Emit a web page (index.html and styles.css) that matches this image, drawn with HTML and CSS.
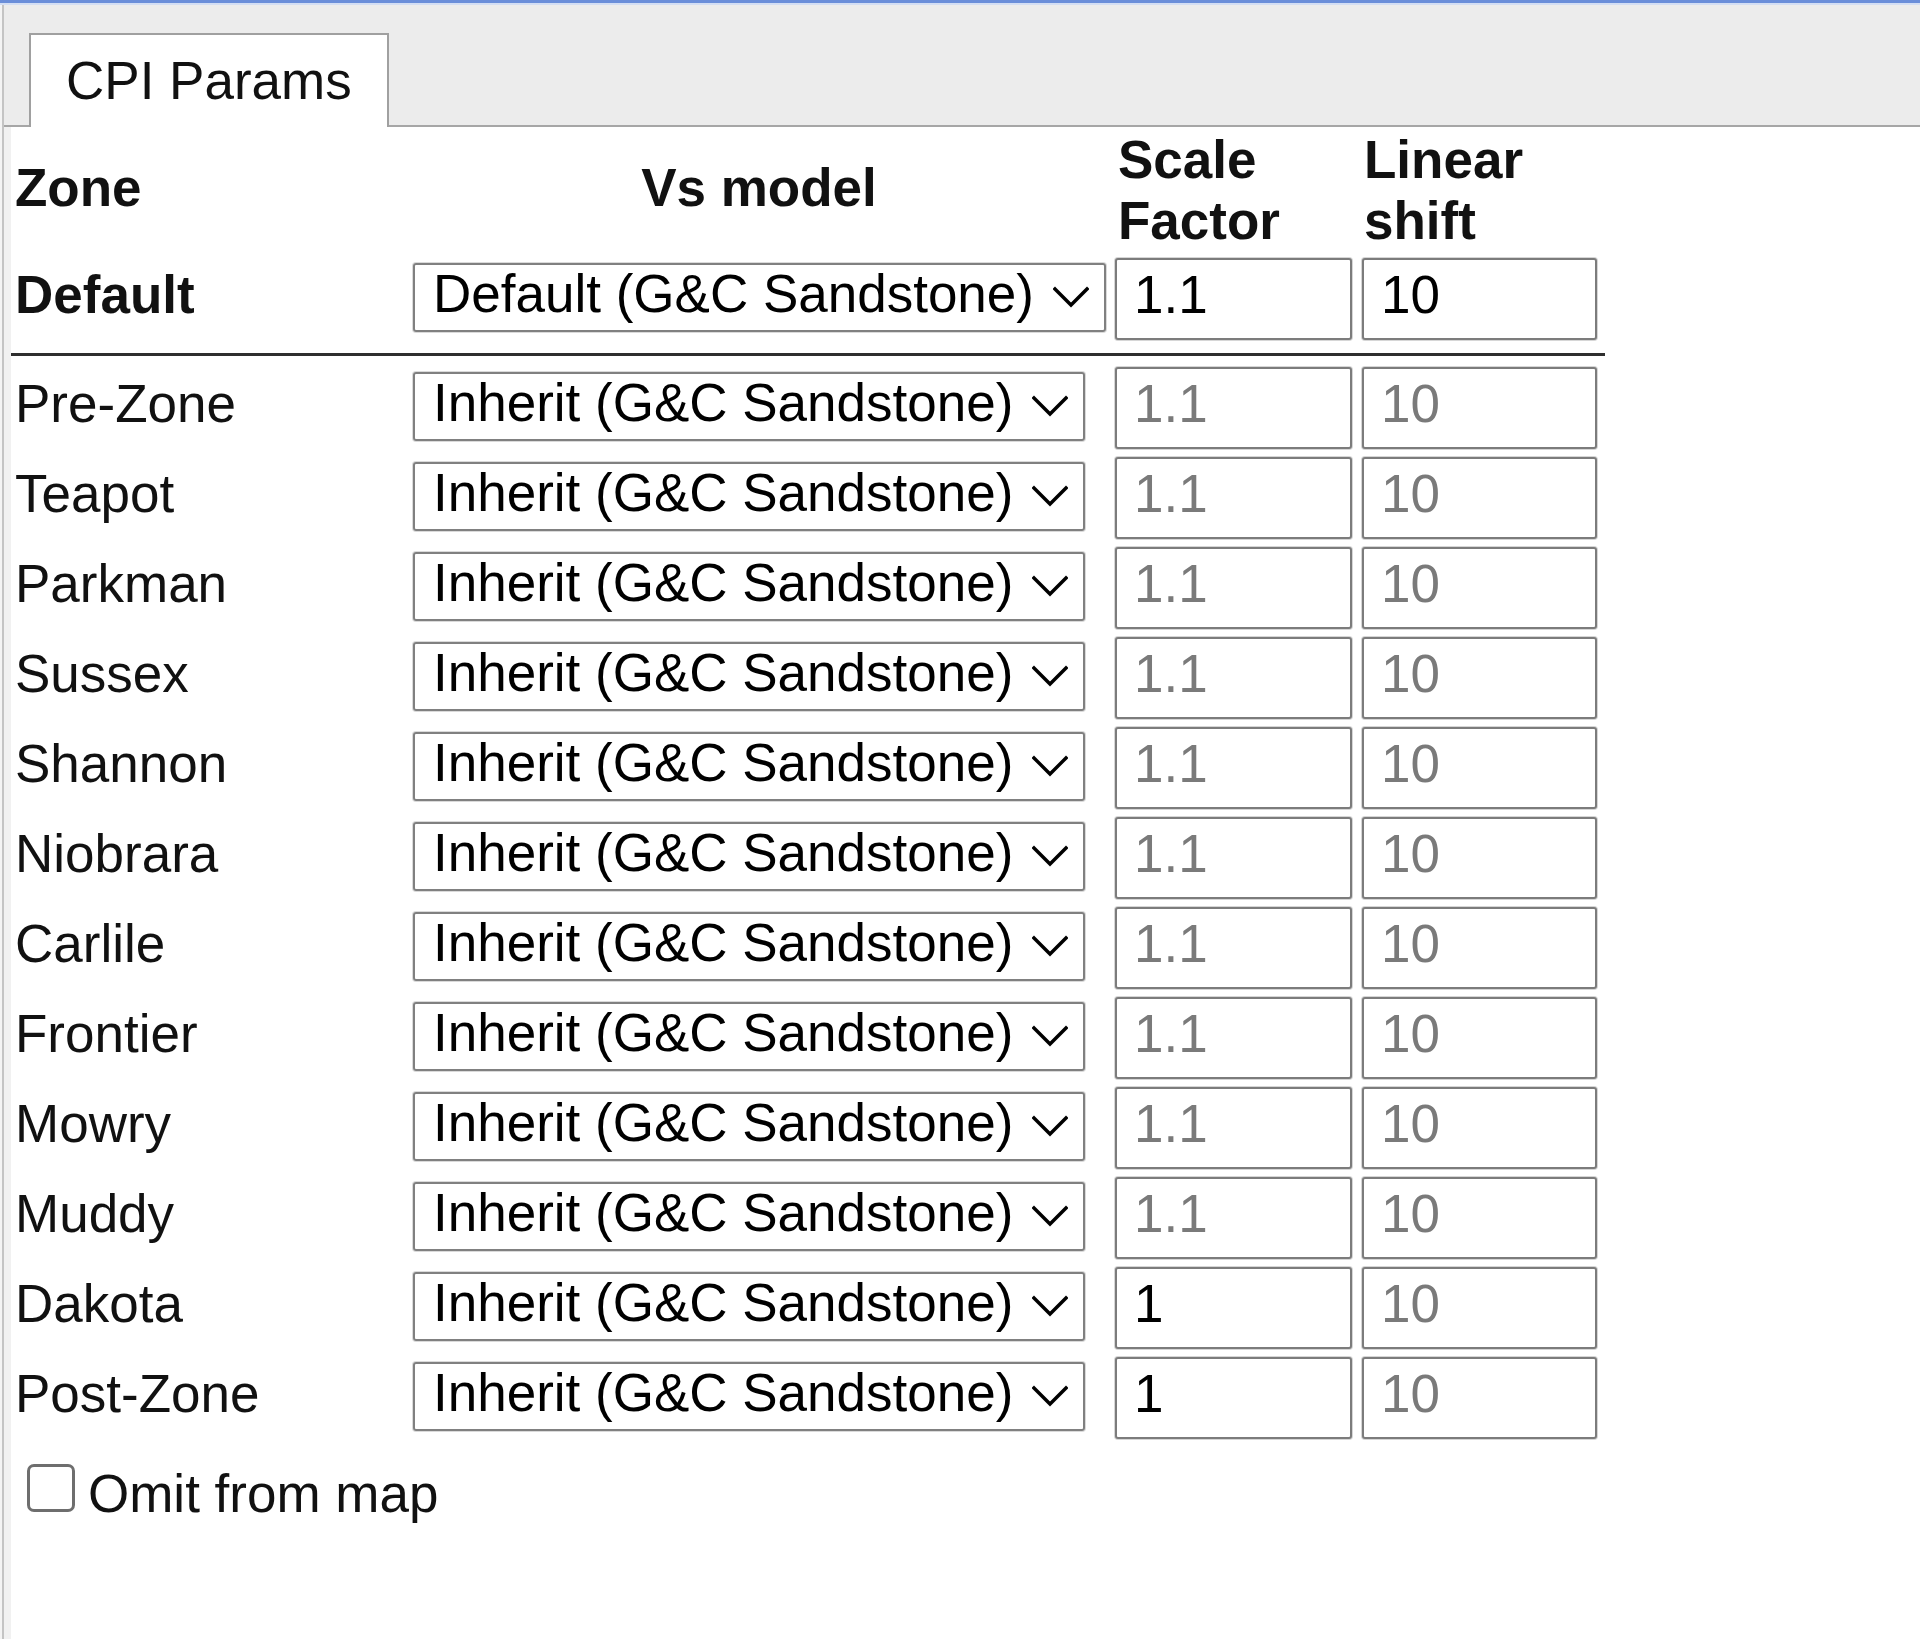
FILE: index.html
```html
<!DOCTYPE html>
<html lang="en">
<head>
<meta charset="utf-8">
<title>CPI Params</title>
<link rel="stylesheet" href="styles.css">
</head>
<body>
<div class="topbar"></div>
<div class="app">
  <div class="tabstrip">
    <div class="tab">CPI Params</div>
  </div>
  <div class="content">
    <div class="grid head">
      <div class="h h-zone">Zone</div>
      <div class="h h-model">Vs model</div>
      <div class="h h-num">Scale<br>Factor</div>
      <div class="h h-num2">Linear<br>shift</div>
    </div>
    <div class="grid row">
      <div class="label bold">Default</div>
      <div class="select select-default"><span>Default (G&amp;C Sandstone)</span><svg class="chev" viewBox="0 0 36 22" width="36" height="22"><polyline points="2,3 18,19 34,3"/></svg></div>
      <input class="num" type="text" value="1.1">
      <input class="num" type="text" value="10">
    </div>
    <div class="sep"></div>
    <div class="zones">
      <div class="grid row">
        <div class="label">Pre-Zone</div>
        <div class="select"><span>Inherit (G&amp;C Sandstone)</span><svg class="chev" viewBox="0 0 36 22" width="36" height="22"><polyline points="2,3 18,19 34,3"/></svg></div>
        <input class="num" type="text" placeholder="1.1">
        <input class="num" type="text" placeholder="10">
      </div>
      <div class="grid row">
        <div class="label">Teapot</div>
        <div class="select"><span>Inherit (G&amp;C Sandstone)</span><svg class="chev" viewBox="0 0 36 22" width="36" height="22"><polyline points="2,3 18,19 34,3"/></svg></div>
        <input class="num" type="text" placeholder="1.1">
        <input class="num" type="text" placeholder="10">
      </div>
      <div class="grid row">
        <div class="label">Parkman</div>
        <div class="select"><span>Inherit (G&amp;C Sandstone)</span><svg class="chev" viewBox="0 0 36 22" width="36" height="22"><polyline points="2,3 18,19 34,3"/></svg></div>
        <input class="num" type="text" placeholder="1.1">
        <input class="num" type="text" placeholder="10">
      </div>
      <div class="grid row">
        <div class="label">Sussex</div>
        <div class="select"><span>Inherit (G&amp;C Sandstone)</span><svg class="chev" viewBox="0 0 36 22" width="36" height="22"><polyline points="2,3 18,19 34,3"/></svg></div>
        <input class="num" type="text" placeholder="1.1">
        <input class="num" type="text" placeholder="10">
      </div>
      <div class="grid row">
        <div class="label">Shannon</div>
        <div class="select"><span>Inherit (G&amp;C Sandstone)</span><svg class="chev" viewBox="0 0 36 22" width="36" height="22"><polyline points="2,3 18,19 34,3"/></svg></div>
        <input class="num" type="text" placeholder="1.1">
        <input class="num" type="text" placeholder="10">
      </div>
      <div class="grid row">
        <div class="label">Niobrara</div>
        <div class="select"><span>Inherit (G&amp;C Sandstone)</span><svg class="chev" viewBox="0 0 36 22" width="36" height="22"><polyline points="2,3 18,19 34,3"/></svg></div>
        <input class="num" type="text" placeholder="1.1">
        <input class="num" type="text" placeholder="10">
      </div>
      <div class="grid row">
        <div class="label">Carlile</div>
        <div class="select"><span>Inherit (G&amp;C Sandstone)</span><svg class="chev" viewBox="0 0 36 22" width="36" height="22"><polyline points="2,3 18,19 34,3"/></svg></div>
        <input class="num" type="text" placeholder="1.1">
        <input class="num" type="text" placeholder="10">
      </div>
      <div class="grid row">
        <div class="label">Frontier</div>
        <div class="select"><span>Inherit (G&amp;C Sandstone)</span><svg class="chev" viewBox="0 0 36 22" width="36" height="22"><polyline points="2,3 18,19 34,3"/></svg></div>
        <input class="num" type="text" placeholder="1.1">
        <input class="num" type="text" placeholder="10">
      </div>
      <div class="grid row">
        <div class="label">Mowry</div>
        <div class="select"><span>Inherit (G&amp;C Sandstone)</span><svg class="chev" viewBox="0 0 36 22" width="36" height="22"><polyline points="2,3 18,19 34,3"/></svg></div>
        <input class="num" type="text" placeholder="1.1">
        <input class="num" type="text" placeholder="10">
      </div>
      <div class="grid row">
        <div class="label">Muddy</div>
        <div class="select"><span>Inherit (G&amp;C Sandstone)</span><svg class="chev" viewBox="0 0 36 22" width="36" height="22"><polyline points="2,3 18,19 34,3"/></svg></div>
        <input class="num" type="text" placeholder="1.1">
        <input class="num" type="text" placeholder="10">
      </div>
      <div class="grid row">
        <div class="label">Dakota</div>
        <div class="select"><span>Inherit (G&amp;C Sandstone)</span><svg class="chev" viewBox="0 0 36 22" width="36" height="22"><polyline points="2,3 18,19 34,3"/></svg></div>
        <input class="num" type="text" value="1" placeholder="1.1">
        <input class="num" type="text" placeholder="10">
      </div>
      <div class="grid row">
        <div class="label">Post-Zone</div>
        <div class="select"><span>Inherit (G&amp;C Sandstone)</span><svg class="chev" viewBox="0 0 36 22" width="36" height="22"><polyline points="2,3 18,19 34,3"/></svg></div>
        <input class="num" type="text" value="1" placeholder="1.1">
        <input class="num" type="text" placeholder="10">
      </div>
    </div>
    <label class="omit"><span class="checkbox"></span><span class="omit-text">Omit from map</span></label>
  </div>
</div>
</body>
</html>
```

FILE: styles.css
```css
html, body {
  margin: 0;
  padding: 0;
  height: 100%;
}

body {
  background: #f4f4f4;
  font-family: "Liberation Sans", Arial, sans-serif;
  font-size: 53px;
  color: #111;
  display: flex;
  flex-direction: column;
}

.topbar {
  height: 3px;
  background: #6a8ed9;
  border-bottom: 2px solid #d3def3;
  flex: none;
}

.app {
  flex: 1;
  margin-left: 2px;
  border-left: 2px solid #c4c4c4;
  display: flex;
  flex-direction: column;
}

.tabstrip {
  background: #ececec;
  border-bottom: 2px solid #a6a6a6;
  padding-left: 25px;
  display: flex;
  align-items: flex-end;
  height: 120px;
}

.tab {
  background: #fff;
  border: 2px solid #a0a0a0;
  border-bottom: none;
  margin-bottom: -2px;
  padding: 19px 35px 20px 35px;
  line-height: 53px;
  white-space: nowrap;
}

.content {
  flex: 1;
  background: #fff;
  border-left: 7px solid #f1f1f1;
}

.grid {
  display: grid;
  grid-template-columns: 388px 692px 237px 235px;
  column-gap: 10px;
  padding-left: 4px;
  align-items: center;
  width: 1590px;
}

.head {
  padding-top: 2px;
  padding-bottom: 5px;
}

.h {
  font-weight: bold;
  line-height: 61px;
}

.h-zone,
.h-model {
  padding-bottom: 8px;
}

.h-num,
.h-num2 {
  padding-bottom: 2px;
}

.h-model {
  text-align: center;
}

.h-num {
  padding-left: 3px;
}

.h-num2 {
  padding-left: 2px;
}

.row {
  height: 82px;
}

.label {
  line-height: 61px;
  white-space: nowrap;
  padding-bottom: 10px;
}

.bold {
  font-weight: bold;
}

.select {
  box-sizing: border-box;
  width: 672px;
  height: 69px;
  border: 2px solid #808080;
  border-radius: 3px;
  box-shadow: 0 0 0 1px #dadada;
  padding: 0 15px 7px 18px;
  display: flex;
  align-items: center;
  justify-content: space-between;
  white-space: nowrap;
  color: #000;
  line-height: 61px;
  margin-bottom: 4px;
}

.select-default {
  width: 693px;
}

.chev {
  flex: none;
  fill: none;
  stroke: #000;
  stroke-width: 3.4;
  stroke-linecap: square;
  stroke-linejoin: miter;
  margin-top: 6px;
}

.num {
  box-sizing: border-box;
  width: 100%;
  height: 82px;
  margin: 0;
  border: 2px solid #7c7c7c;
  border-radius: 3px;
  box-shadow: 0 0 0 1px #d6d6d6;
  padding: 0 0 10px 17px;
  font-family: "Liberation Sans", Arial, sans-serif;
  font-size: 53px;
  color: #000;
  background: #fff;
  outline: none;
}

.num::placeholder {
  color: #7a7a7a;
  opacity: 1;
}

.sep {
  width: 1594px;
  height: 3px;
  background: #2e2e2e;
  margin: 13px 0 11px 0;
}

.zones {
  display: flex;
  flex-direction: column;
  gap: 8px;
}

.omit {
  display: flex;
  align-items: flex-start;
  margin: 25px 0 0 16px;
}

.checkbox {
  box-sizing: border-box;
  width: 48px;
  height: 48px;
  border: 3px solid #6e6e6e;
  border-radius: 7px;
  background: #fff;
  flex: none;
}

.omit-text {
  margin-left: 13px;
  line-height: 61px;
  margin-top: -1px;
}
```
